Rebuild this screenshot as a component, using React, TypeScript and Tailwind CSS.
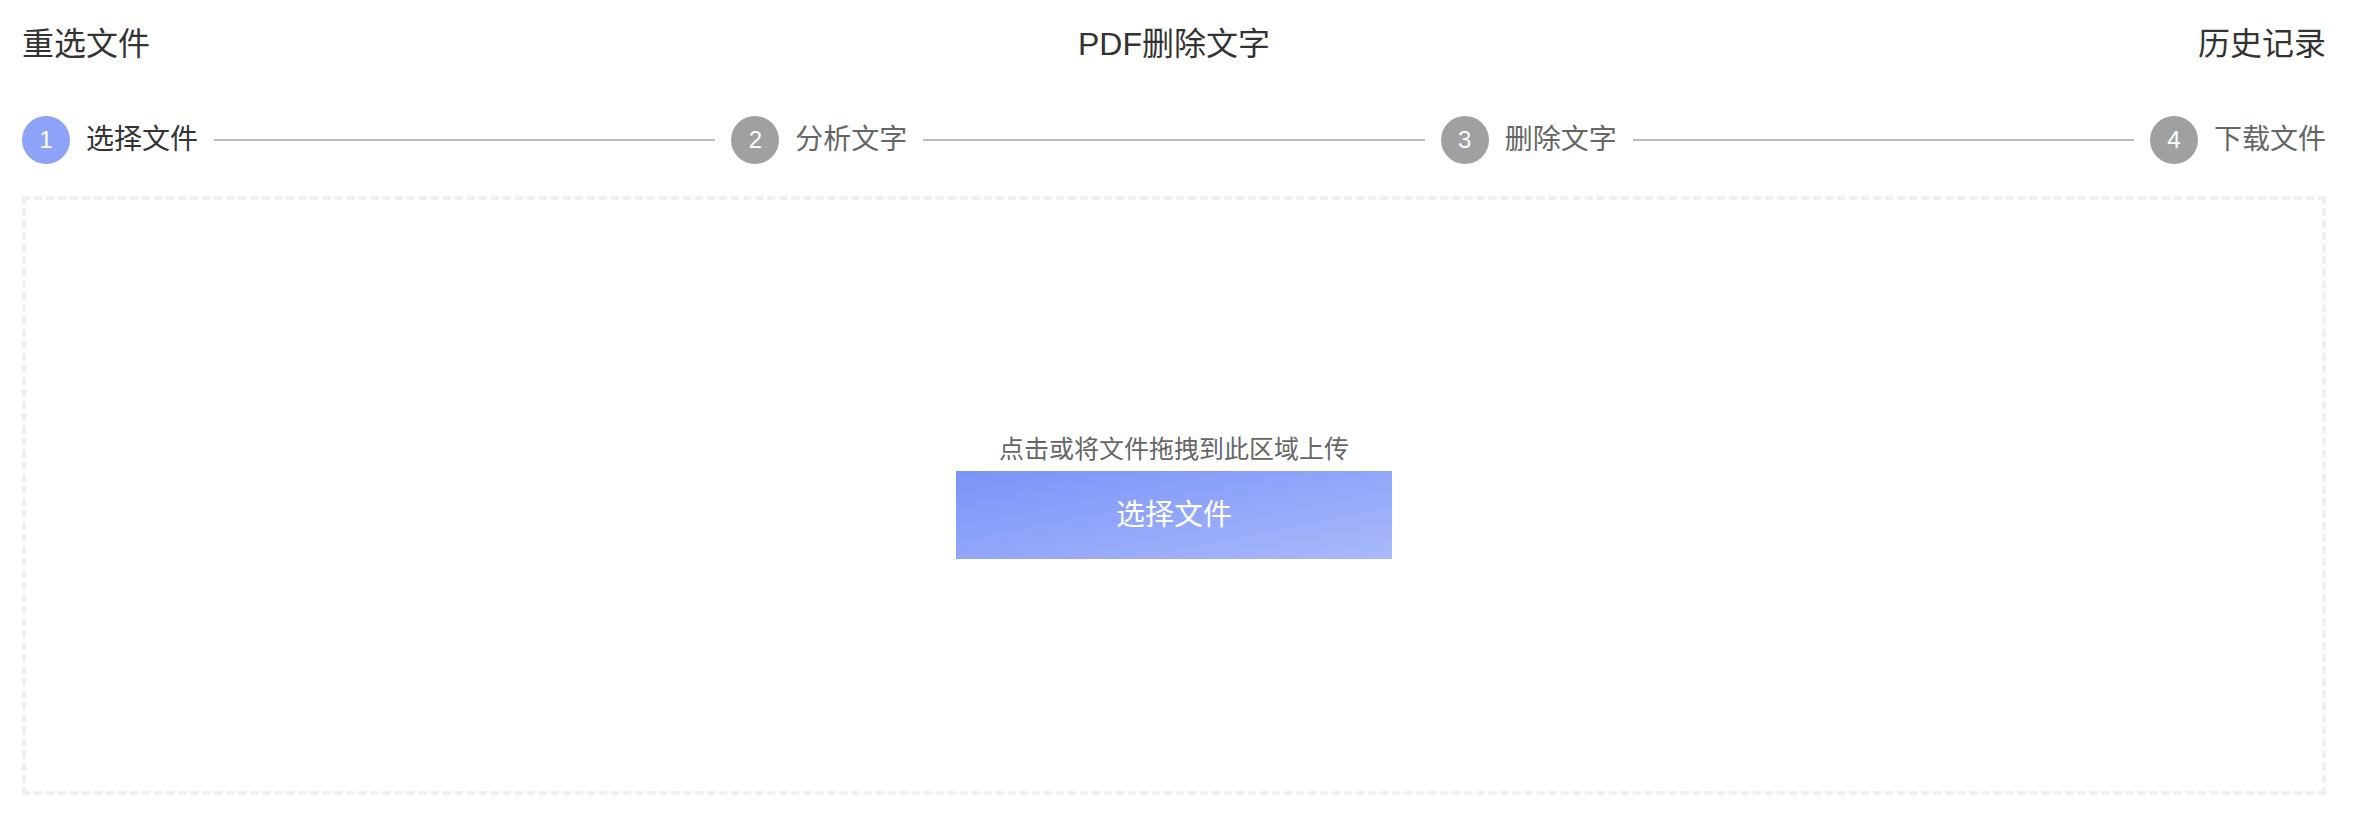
import React from "react";

const steps = [
  { n: 1, label: "选择文件", active: true },
  { n: 2, label: "分析文字", active: false },
  { n: 3, label: "删除文字", active: false },
  { n: 4, label: "下载文件", active: false },
];

const font = { fontFamily: '"Liberation Sans", "Noto Sans CJK SC", sans-serif' };

export default function App() {
  return (
    <div className="w-full min-h-screen bg-white pl-[22px] pr-[28px]" style={font}>
      <header className="h-[88px] flex items-center justify-between text-[32px] text-[#333]">
        <span className="cursor-pointer">重选文件</span>
        <span>PDF删除文字</span>
        <span className="cursor-pointer">历史记录</span>
      </header>

      <div className="h-[104px] flex items-center">
        {steps.map((s, i) => (
          <React.Fragment key={s.n}>
            <div className="flex items-center shrink-0">
              <div
                className={
                  "w-[48px] h-[48px] rounded-full flex items-center justify-center text-white text-[24px] " +
                  (s.active ? "bg-[#8ea3f8]" : "bg-[#a0a0a0]")
                }
              >
                {s.n}
              </div>
              <span
                className={
                  "ml-[16px] text-[28px] " + (s.active ? "text-[#333]" : "text-[#666]")
                }
              >
                {s.label}
              </span>
            </div>
            {i < steps.length - 1 && (
              <div className="flex-1 h-[2px] bg-[#bbbbbb] mx-[16px]" />
            )}
          </React.Fragment>
        ))}
      </div>

      <div className="mt-[4px] h-[599px] border-4 border-dashed border-[#f0f0f0] flex flex-col items-center justify-center">
        <p className="text-[25px] leading-[32px] text-[#666]">点击或将文件拖拽到此区域上传</p>
        <button className="mt-[6px] w-[436px] h-[88px] bg-gradient-to-br from-[#7a93f8] to-[#aab9fb] text-white text-[29px] pt-[3px]">
          选择文件
        </button>
      </div>
    </div>
  );
}
